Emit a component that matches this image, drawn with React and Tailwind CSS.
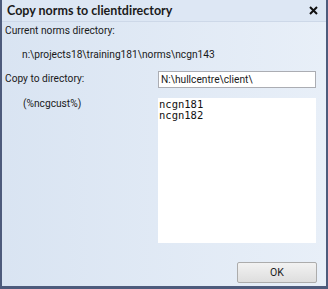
export default function App() {
  const ui = { fontFamily: 'Roboto, "Open Sans", sans-serif' };
  return (
    <div className="w-[328px] h-[289px] bg-[#4d5b7c] pl-[2px] pr-[2px] pb-[3px] flex flex-col text-[#1a1a1a]" style={ui}>
      <div className="h-[22px] shrink-0 bg-[#dde7f4] flex items-center justify-between pl-[5px] pr-[8px] border-b border-[#cdd8e8]">
        <span className="text-[12.5px] font-bold text-[#1b1b1b] leading-none pt-[1px]" style={{ fontFamily: 'Lato, sans-serif' }}>Copy norms to clientdirectory</span>
        <svg width="9" height="9" viewBox="0 0 9 9"><path d="M1 1L8 8M8 1L1 8" stroke="#111" strokeWidth="2" /></svg>
      </div>
      <div className="flex-1 bg-gradient-to-r from-[#d9e4f2] to-[#e8eff8] flex flex-col pl-[3px] pr-[10px] text-[10.2px]">
        <div className="mt-[1px] h-[16px] leading-[16px]">Current norms directory:</div>
        <div className="mt-[8px] h-[16px] leading-[16px] pl-[17px]">n:\projects18\training181\norms\ncgn143</div>
        <div className="mt-[8px] flex">
          <div className="w-[153px] leading-[16px]">Copy to directory:</div>
          <div className="flex-1 h-[17px] bg-white border border-[#abadb3] px-[2px] leading-[15px]">N:\hullcentre\client\</div>
        </div>
        <div className="mt-[10px] flex">
          <div className="w-[153px] pl-[18px] leading-[16px] -mt-[2px]">(%ncgcust%)</div>
          <div className="flex-1 h-[145px] bg-white pl-[1px] pt-[1px] text-[10.5px] leading-[11px] text-[#111]" style={{ fontFamily: '"DejaVu Sans Mono", monospace' }}>
            <div>ncgn181</div>
            <div>ncgn182</div>
          </div>
        </div>
        <div className="mt-[19px] flex justify-end -mr-[1px]">
          <div className="w-[80px] h-[21px] border border-[#acacac] rounded-[2px] bg-gradient-to-b from-[#f2f2f2] to-[#dedede] flex items-center justify-center text-[10.5px]">OK</div>
        </div>
      </div>
    </div>
  );
}
